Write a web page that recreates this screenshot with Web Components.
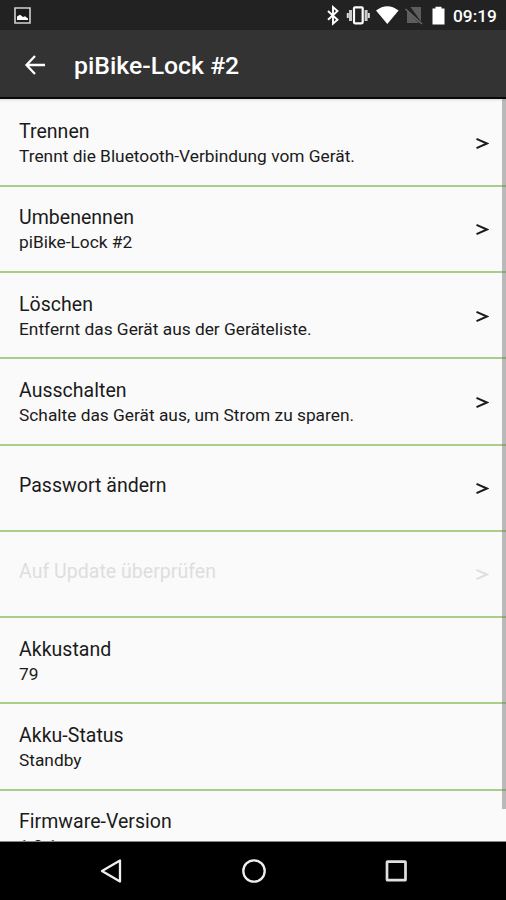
<!DOCTYPE html>
<html lang="de">
<head>
<meta charset="utf-8">
<title>piBike-Lock #2</title>
<style>
html,body{margin:0;height:100%;background:#000;overflow:hidden;font-family:Roboto,"Liberation Sans",sans-serif}
</style>
</head>
<body>
<device-screen></device-screen>
<script>
const define = (name, html) => {
  customElements.define(name, class extends HTMLElement {
    constructor() {
      super();
      this.attachShadow({ mode: 'open' }).innerHTML = html;
    }
  });
};

define('status-bar', `
<style>
:host{display:flex;height:30px;background:#222;color:#fff;align-items:center;box-sizing:border-box;padding:0 9px 0 14px;flex:none}
.space{flex:1}
svg{display:block;flex:none}
time{font-size:17.300px;font-weight:500;line-height:30px;padding-top:2px;width:44px;white-space:nowrap}
</style>
<svg width="17" height="17" viewBox="0 0 17 17"><path d="M1 1h15v15H1z" fill="#1b1b1b" stroke="#d2d2d2" stroke-width="1.6"/><path d="M3 13V9.500l3-1.800 3 2.300 2-.8 3 2.300V13z" fill="#fff"/></svg>
<span class="space"></span>
<svg width="128" height="30" viewBox="325 0 128 30">
<path d="M328 11l9.500 8.700-4.500 4V7l4.500 4-9.500 8.700" fill="none" stroke="#fff" stroke-width="1.900"/>
<path d="M347.800 13v5M368.800 13v5" stroke="#ddd" stroke-width="2"/><path d="M350.500 10v11M366.100 10v11" stroke="#ccc" stroke-width="3"/>
<rect x="354" y="7.300" width="8.700" height="16" rx="1" fill="#222" stroke="#fff" stroke-width="2.200"/>
<path d="M376 10.500q11.300-8.500 22.600 0L387.300 24z" fill="#fff"/>
<path d="M410.500 7H421v14.500zM407 10.500L419 23h-12z" fill="#5d5d5d"/><path d="M405.500 9L422 24" stroke="#686868" stroke-width="1.500"/>
<path d="M432.500 8.500h3v-1.800h6v1.800h3V24.500h-12z" fill="#fff"/>
</svg>
<time>09:19</time>`);

define('app-bar', `
<style>
:host{display:flex;height:69px;background:#333;color:#fff;align-items:center;box-sizing:border-box;border-bottom:2px solid #080808;padding:2px 0 0 24px;flex:none}
svg{display:block;margin-right:28px;flex:none}
h1{font-size:24.800px;font-weight:500;margin:0;line-height:30px;white-space:nowrap;padding-top:2px}
</style>
<svg width="22" height="20" viewBox="0 0 22 20"><path d="M11 1L2.500 10l8.500 9M2.500 10H21" fill="none" stroke="#fff" stroke-width="2.300"/></svg>
<h1><slot></slot></h1>`);

define('setting-row', `
<style>
:host{display:flex;height:86.250px;box-sizing:border-box;border-bottom:2px solid #a9ce87;color:#1b1b1b;align-items:center;padding:0 17px 0 19px;flex:none}
:host([disabled]){color:#dedede}
.text{flex:1;display:flex;flex-direction:column;padding-top:3px}
:host([single]) .text{padding:0 0 5px}
.title{font-size:19.500px;line-height:25px;letter-spacing:.03px}
::slotted([slot=detail]){display:block;font-size:17.320px;line-height:25px}
.arrow{display:none;margin-top:2px}
:host([action]) .arrow{display:block}
</style>
<div class="text"><span class="title"><slot></slot></span><slot name="detail"></slot></div>
<svg class="arrow" width="13" height="13" viewBox="0 0 13 13"><path d="M.5 1.800L11 6.500 .5 11.200" fill="none" stroke="currentColor" stroke-width="2"/></svg>`);

define('scroll-list', `
<style>
:host{display:flex;flex-direction:column;height:743px;padding-top:1.500px;background:#fafafa;overflow:hidden;position:relative;flex:none;box-sizing:border-box;border-bottom:1px solid #888}
.shade{position:absolute;inset:0 0 auto;height:3px;background:linear-gradient(#e3e0e0,#fafafa)}
.thumb{position:absolute;right:0;top:0;width:4px;height:710px;background:rgba(120,120,120,.5)}
</style>
<slot></slot><div class="shade"></div><div class="thumb"></div>`);

define('nav-bar', `
<style>
:host{display:grid;grid-template-columns:repeat(3,142px);justify-content:center;height:58px;background:#000;place-items:center;padding-left:1px}
svg{display:block}
</style>
<svg width="26" height="26" viewBox="0 0 26 26"><path d="M21 2.500v21L3 13z" fill="none" stroke="#eee" stroke-width="2.300" stroke-linejoin="round"/></svg>
<svg width="26" height="26" viewBox="0 0 26 26"><circle cx="13" cy="13" r="10.700" fill="none" stroke="#eee" stroke-width="2.300"/></svg>
<svg width="26" height="26" viewBox="0 0 26 26"><rect x="4" y="3.700" width="18.500" height="18.500" rx=".5" fill="none" stroke="#e0e0e0" stroke-width="2.700"/></svg>`);

define('device-screen', `
<style>
:host{display:flex;flex-direction:column;width:506px;height:900px;overflow:hidden}
</style>
<status-bar></status-bar>
<app-bar>piBike-Lock #2</app-bar>
<scroll-list>
<setting-row action>Trennen<span slot="detail">Trennt die Bluetooth-Verbindung vom Gerät.</span></setting-row>
<setting-row action>Umbenennen<span slot="detail">piBike-Lock #2</span></setting-row>
<setting-row action>Löschen<span slot="detail">Entfernt das Gerät aus der Geräteliste.</span></setting-row>
<setting-row action>Ausschalten<span slot="detail">Schalte das Gerät aus, um Strom zu sparen.</span></setting-row>
<setting-row action single>Passwort ändern</setting-row>
<setting-row action single disabled>Auf Update überprüfen</setting-row>
<setting-row>Akkustand<span slot="detail">79</span></setting-row>
<setting-row>Akku-Status<span slot="detail">Standby</span></setting-row>
<setting-row>Firmware-Version<span slot="detail">1.0.1</span></setting-row>
</scroll-list>
<nav-bar></nav-bar>`);
</script>
</body>
</html>
